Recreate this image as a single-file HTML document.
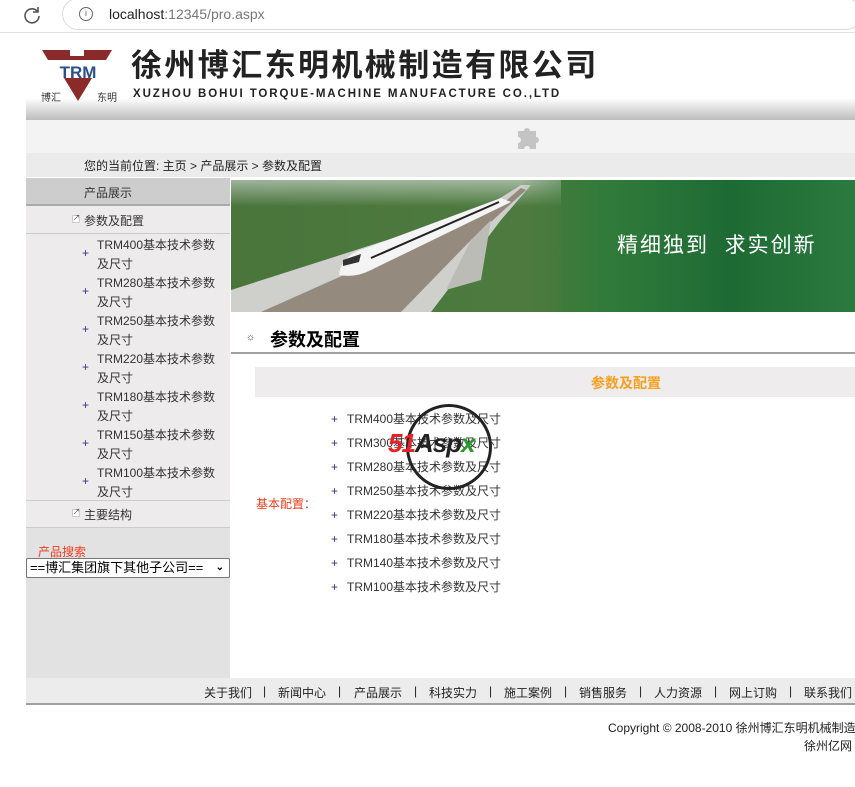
<!DOCTYPE html>
<html><head><meta charset="utf-8"><style>
*{margin:0;padding:0;box-sizing:border-box}
html,body{width:855px;height:787px;overflow:hidden}
body{background:#fff;position:relative;font-family:"Liberation Sans","Noto Sans CJK SC",sans-serif;font-size:12px;color:#333}
.a{position:absolute}
.t{white-space:nowrap}
.f{position:absolute;top:684px;color:#222;white-space:nowrap}
</style></head><body>
<!-- browser bar -->
<div class="a" style="left:0;top:0;width:855px;height:33px;background:#fff;border-bottom:1px solid #e3e3e3"></div>
<svg class="a" style="left:22px;top:5px" width="20" height="20" viewBox="0 0 20 20"><path d="M15.5 6.5A7 7 0 1 0 17 11" fill="none" stroke="#555" stroke-width="1.6"/><path d="M16 2v5h-5" fill="none" stroke="#555" stroke-width="1.6"/></svg>
<div class="a" style="left:62px;top:-2px;width:800px;height:32px;border:1px solid #ddd;border-radius:16px;background:#fff"></div>
<div class="a" style="left:79px;top:7px;width:14px;height:14px;border:1.4px solid #666;border-radius:50%;font-size:9px;text-align:center;line-height:11px;color:#666">i</div>
<div class="a t" style="left:109px;top:6px;font-size:14px;color:#222">localhost<span style="color:#777">:12345/pro.aspx</span></div>

<!-- header -->
<div class="a" style="left:26px;top:98px;width:829px;height:22px;background:linear-gradient(#fff,#c9c9c9 80%,#bdbdbd)"></div>
<svg class="a" style="left:38px;top:48px" width="80" height="56" viewBox="0 0 80 56"><path d="M4 2h28v6h14V2h28l-6 10H10z" fill="#8b2a2a"/><path d="M26 30h28L40 53z" fill="#8b2a2a"/><text x="40" y="30" text-anchor="middle" font-family="Liberation Sans" font-weight="bold" font-size="17" fill="#2a4f8a">TRM</text></svg>
<div class="a t" style="left:41px;top:89px;font-size:10px;color:#333">博汇</div>
<div class="a t" style="left:97px;top:89px;font-size:10px;color:#333">东明</div>
<div class="a t" style="left:131px;top:48px;font-size:31px;font-weight:bold;color:#222;letter-spacing:2.4px;line-height:36px">徐州博汇东明机械制造有限公司</div>
<div class="a t" style="left:133px;top:88px;font-size:11.5px;font-weight:bold;color:#222;letter-spacing:1.9px">XUZHOU BOHUI TORQUE-MACHINE MANUFACTURE CO.,LTD</div>
<div class="a" style="left:26px;top:120px;width:829px;height:33px;background:#f3f3f3"></div>
<svg class="a" style="left:514px;top:123px" width="28" height="28" viewBox="0 0 28 28"><path d="M4 8h6a3 3 0 1 1 6 0h6v6a3 3 0 1 1 0 6v6h-6a3 3 0 1 0-6 0H4v-6a3 3 0 1 0 0-6z" fill="#c4c4c4"/></svg>
<div class="a" style="left:26px;top:153px;width:829px;height:24px;background:#ebebeb"></div>
<div class="a t" style="left:84px;top:157px;color:#222">您的当前位置: 主页 &gt; 产品展示 &gt; 参数及配置</div>

<!-- sidebar -->
<div class="a" style="left:26px;top:178px;width:204px;height:500px;background:#e3e2e3"></div>
<div class="a" style="left:26px;top:178px;width:204px;height:350px;background:#edebec"></div>
<div class="a" style="left:26px;top:178px;width:204px;height:28px;background:#cdcdcd;border-bottom:2px solid #aaa"></div>
<div class="a t" style="left:84px;top:184px;font-size:12px;color:#333">产品展示</div>
<div class="a" style="left:72px;top:215px;width:8px;height:8px;background:#fff;border:1px solid #ccc;font-size:7px;line-height:6px;text-align:center">↗</div>
<div class="a t" style="left:84px;top:212px">参数及配置</div>
<div class="a" style="left:26px;top:233px;width:204px;height:1px;background:#ccc"></div>
<div class="a" style="left:97px;top:236px;width:125px;line-height:19px;font-size:12px;color:#333">TRM400基本技术参数及尺寸<br>TRM280基本技术参数及尺寸<br>TRM250基本技术参数及尺寸<br>TRM220基本技术参数及尺寸<br>TRM180基本技术参数及尺寸<br>TRM150基本技术参数及尺寸<br>TRM100基本技术参数及尺寸</div>
<div class="a" style="left:82px;top:234px;line-height:38px;color:#33338a;font-size:12px">+<br>+<br>+<br>+<br>+<br>+<br>+</div>
<div class="a" style="left:26px;top:500px;width:204px;height:1px;background:#ccc"></div>
<div class="a" style="left:72px;top:509px;width:8px;height:8px;background:#fff;border:1px solid #ccc;font-size:7px;line-height:6px;text-align:center">↗</div>
<div class="a t" style="left:84px;top:506px">主要结构</div>
<div class="a" style="left:26px;top:527px;width:204px;height:1px;background:#ccc"></div>
<div class="a t" style="left:38px;top:543px;color:#f03c1e">产品搜索</div>
<div class="a t" style="left:26px;top:558px;width:204px;height:20px;background:#fff;border:1px solid #777;border-radius:2px;font-size:13px;color:#000;padding-left:3px;line-height:17px">==博汇集团旗下其他子公司== <span style="position:absolute;right:5px;font-size:10px;font-weight:bold">⌄</span></div>

<!-- banner -->
<div class="a" style="left:231px;top:180px;width:624px;height:132px;background:linear-gradient(90deg,#3f6a33 0%,#4a7a3a 40%,#4d7b3f 46%,#2f7a3a 62%,#1e6a34 80%,#2b7a3e 100%);overflow:hidden">
<svg width="624" height="132"><defs><linearGradient id="s" x1="0" y1="0" x2="0" y2="1"><stop offset="0" stop-color="#c8d2c8"/><stop offset=".2" stop-color="#4e7a40"/></linearGradient><linearGradient id="g" x1="0" y1="0" x2="1" y2="0"><stop offset="0" stop-color="#4a7a3a" stop-opacity="0"/><stop offset="1" stop-color="#2f7a3a"/></linearGradient></defs>
<rect x="0" y="0" width="330" height="132" fill="url(#s)" opacity=".7"/>
<path d="M0 132 L0 110 L250 30 L290 5 L300 5 L270 40 L200 132z" fill="#cfd0cc"/>
<path d="M30 132 L270 25 L290 8 L295 10 L240 60 L170 132z" fill="#948a7e"/>
<path d="M215 110 L240 60 L260 40 L250 100z" fill="#bcbcb6"/>
<path d="M108 95 Q110 75 135 68 L270 18 L280 22 L140 90 Q125 98 108 95z" fill="#f4f4f4"/>
<path d="M112 80 L130 74 L128 82 L112 86z" fill="#333"/>
<path d="M140 78 L268 22" stroke="#222" stroke-width="2"/>
<rect x="290" y="0" width="90" height="132" fill="url(#g)"/>
</svg></div>
<div class="a t" style="left:617px;top:229px;font-size:21px;color:#fff;letter-spacing:2px">精细独到&nbsp;&nbsp;求实创新</div>

<!-- title -->
<div class="a t" style="left:246px;top:332px;font-size:10px;color:#333">☼</div>
<div class="a t" style="left:270px;top:326px;font-size:18px;font-weight:bold;color:#000">参数及配置</div>
<div class="a" style="left:231px;top:352px;width:624px;height:2px;background:#a0a0a0"></div>
<div class="a" style="left:255px;top:367px;width:600px;height:30px;background:#eeeced"></div>
<div class="a t" style="left:591px;top:373px;font-size:14px;font-weight:bold;color:#f5a020">参数及配置</div>
<div class="a t" style="left:256px;top:495px;color:#f03c1e">基本配置：</div>
<div class="a t" style="left:347px;top:407px;line-height:24px;color:#333">TRM400基本技术参数及尺寸<br>TRM300基本技术参数及尺寸<br>TRM280基本技术参数及尺寸<br>TRM250基本技术参数及尺寸<br>TRM220基本技术参数及尺寸<br>TRM180基本技术参数及尺寸<br>TRM140基本技术参数及尺寸<br>TRM100基本技术参数及尺寸</div>
<div class="a" style="left:331px;top:407px;line-height:24px;color:#33338a">+<br>+<br>+<br>+<br>+<br>+<br>+<br>+</div>
<!-- watermark -->
<div class="a" style="left:406px;top:404px;width:86px;height:86px;border:3px solid #222;border-radius:50%"></div>
<div class="a t" style="left:388px;top:428px;font-size:26px;font-weight:bold;font-style:italic;color:#e8202a;letter-spacing:-1px">51<span style="color:#222">Asp</span><span style="color:#2a9a2a">x</span></div>

<!-- footer -->
<div class="a" style="left:26px;top:678px;width:829px;height:27px;background:#ececec;border-bottom:2px solid #a0a0a0"></div>
<div class="f" style="left:204px">关于我们</div><div class="f" style="left:263px">|</div>
<div class="f" style="left:278px">新闻中心</div><div class="f" style="left:338px">|</div>
<div class="f" style="left:354px">产品展示</div><div class="f" style="left:414px">|</div>
<div class="f" style="left:429px">科技实力</div><div class="f" style="left:489px">|</div>
<div class="f" style="left:504px">施工案例</div><div class="f" style="left:564px">|</div>
<div class="f" style="left:579px">销售服务</div><div class="f" style="left:639px">|</div>
<div class="f" style="left:654px">人力资源</div><div class="f" style="left:714px">|</div>
<div class="f" style="left:729px">网上订购</div><div class="f" style="left:789px">|</div>
<div class="f" style="left:804px">联系我们</div>
<div class="a" style="left:0;top:715px;width:855px;height:40px;overflow:hidden">
<div class="a t" style="left:608px;top:4px;color:#222">Copyright © 2008-2010 徐州博汇东明机械制造</div>
<div class="a t" style="left:804px;top:22px;color:#222">徐州亿网</div>
</div>
</body></html>
